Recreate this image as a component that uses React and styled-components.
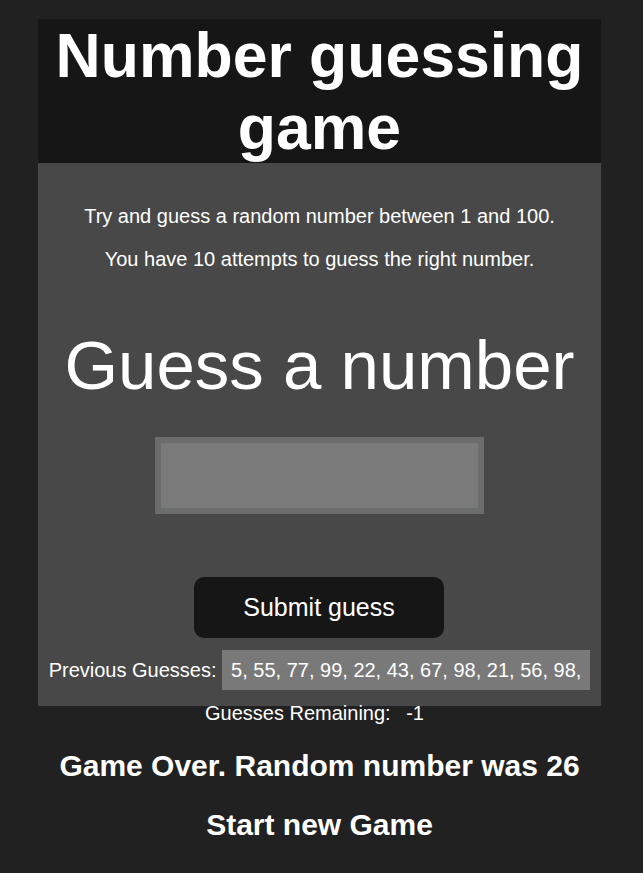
import styled, { createGlobalStyle } from "styled-components";

const GlobalStyle = createGlobalStyle`
    body {
        margin: 0;
        background-color: #212121;
        color: #ffffff;
        font-family: 'Liberation Sans', Arial, sans-serif;
    }
`

const Page = styled.div`
    width: 563px;
    margin: 19px 0 0 38px;
    display: flex;
    flex-direction: column;
    align-items: stretch;
`

const Title = styled.h1`
    margin: 0;
    background-color: #161616;
    font-size: 62.5px;
    font-weight: 700;
    line-height: 72px;
    text-align: center;
`

const Panel = styled.div`
    background-color: #484848;
    padding: 42px 0 16px;
    display: flex;
    flex-direction: column;
    align-items: center;
`

const Intro = styled.p`
    margin: ${ ({ $gap }) => $gap }px 0 0;
    font-size: 20px;
    line-height: 23px;
    text-align: center;
`

const GuessLabel = styled.label`
    margin-top: 55px;
    font-size: 69px;
    line-height: 79px;
`

const GuessInput = styled.input`
    box-sizing: border-box;
    margin-top: 32px;
    width: 329px;
    height: 77px;
    border: 6px solid #6b6d6c;
    background-color: #7a7a7a;
    color: #ffffff;
    font-size: 24px;
    text-align: center;
    outline: none;
`

const SubmitButton = styled.button`
    margin: 63px 1px 0 0;
    width: 250px;
    height: 61px;
    border: none;
    border-radius: 10px;
    background-color: #161616;
    color: #ffffff;
    font-family: inherit;
    font-size: 25px;
    cursor: pointer;
`

const InfoRow = styled.div`
    margin-top: ${ ({ $gap }) => $gap }px;
    display: flex;
    align-items: center;
    justify-content: center;
    font-size: 20px;
    line-height: 23px;
    white-space: pre;
`

const InfoValue = styled.span`
    padding: ${ ({ $boxed }) => $boxed ? "8.5px 9px" : "0 10px" };
    background-color: ${ ({ $boxed }) => $boxed ? "#797979" : "transparent" };
`

const Message = styled.h2`
    margin: ${ ({ $gap }) => $gap }px 0 0;
    font-size: 30px;
    font-weight: 700;
    line-height: 34px;
    text-align: center;
`

export default function App (){
    const guesses = [5, 55, 77, 99, 22, 43, 67, 98, 21, 56, 98]

    return (
        <>
            <GlobalStyle />
            <Page>
                <Title>Number guessing game</Title>
                <Panel>
                    <Intro $gap={0}>Try and guess a random number between 1 and 100.</Intro>
                    <Intro $gap={20}>You have 10 attempts to guess the right number.</Intro>
                    <GuessLabel htmlFor="guess">Guess a number</GuessLabel>
                    <GuessInput id="guess" type="text" />
                    <SubmitButton>Submit guess</SubmitButton>
                    <InfoRow $gap={12}>
                        <span>Previous Guesses: </span>
                        <InfoValue $boxed>{guesses.map((g) => `${g}, `).join("").trim()}</InfoValue>
                    </InfoRow>
                </Panel>
                <InfoRow $gap={-4}>
                    <span>Guesses Remaining: </span>
                    <InfoValue>-1</InfoValue>
                </InfoRow>
                <Message $gap={24}>Game Over. Random number was 26</Message>
                <Message $gap={25}>Start new Game</Message>
            </Page>
        </>
    )
}
